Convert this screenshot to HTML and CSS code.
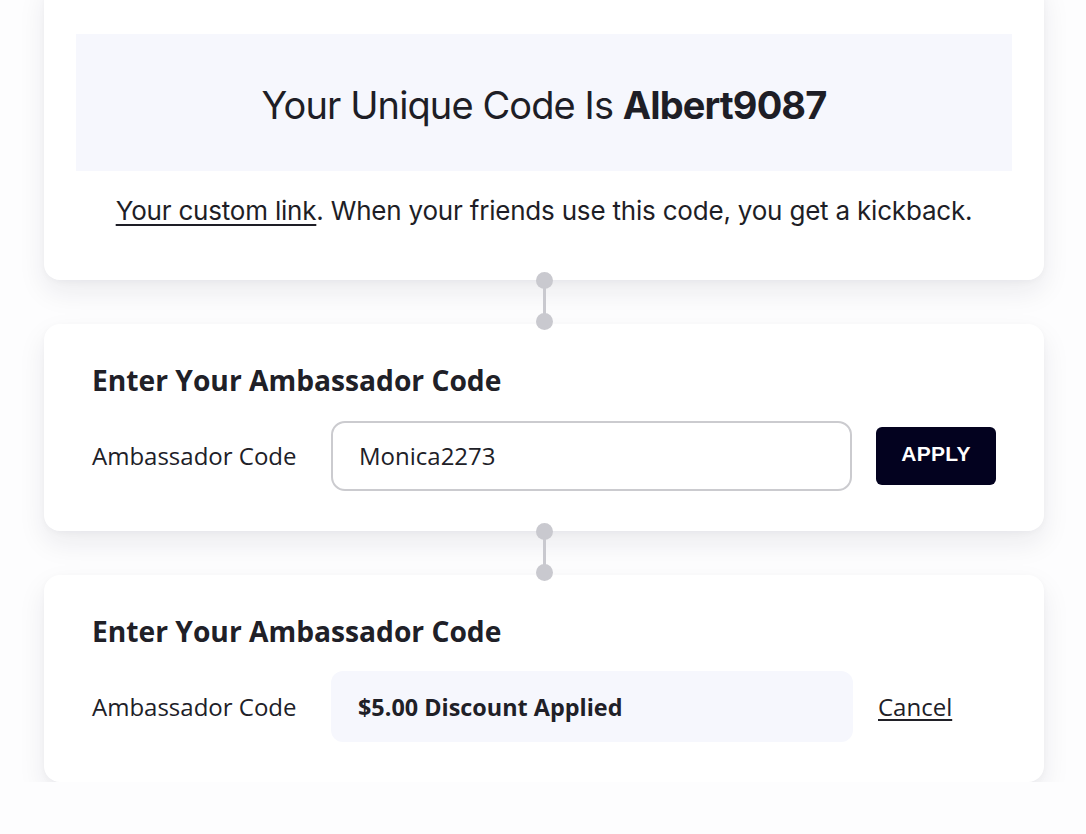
FILE: index.html
```html
<!DOCTYPE html>
<html>
<head>
<meta charset="utf-8">
<link rel="stylesheet" href="styles.css">
</head>
<body>
<main class="stack">
  <section class="card card-top">
    <div class="code-box">
      <p class="code-text">Your Unique Code Is <strong>Albert9087</strong></p>
    </div>
    <p class="link-text"><a class="ulink" href="#">Your custom link</a>. When your friends use this code, you get a kickback.</p>
  </section>

  <div class="connector"><span class="dot"></span><span class="bar"></span><span class="dot"></span></div>

  <section class="card">
    <h2 class="title">Enter Your Ambassador Code</h2>
    <div class="row">
      <span class="label">Ambassador Code</span>
      <div class="field">Monica2273</div>
      <button class="apply">APPLY</button>
    </div>
  </section>

  <div class="connector"><span class="dot"></span><span class="bar"></span><span class="dot"></span></div>

  <section class="card">
    <h2 class="title">Enter Your Ambassador Code</h2>
    <div class="row">
      <span class="label">Ambassador Code</span>
      <div class="applied">$5.00 Discount Applied</div>
      <a class="cancel" href="#">Cancel</a>
    </div>
  </section>
</main>
</body>
</html>
```

FILE: styles.css
```css
* { box-sizing: border-box; }
html, body { margin: 0; padding: 0; }
body {
  background: #fdfdfe;
  color: #1d1d24;
  font-family: "Open Sans", "Liberation Sans", sans-serif;
  overflow: hidden;
}
.stack {
  width: 1000px;
  margin-left: 44px;
  display: flex;
  flex-direction: column;
}
.card {
  background: #ffffff;
  border-radius: 16px;
  box-shadow: 0 12px 28px rgba(30, 30, 50, 0.08), 0 2px 6px rgba(30, 30, 50, 0.03);
  padding: 40px 48px 40px 48px;
  height: 207px;
}
.card-top {
  margin-top: -20px;
  height: 300px;
  padding: 54px 32px 0 32px;
}
.code-box {
  background: #f6f7fd;
  height: 137px;
  display: flex;
  align-items: center;
  justify-content: center;
}
.code-text {
  margin: 0;
  font-family: "Inter", "Liberation Sans", sans-serif;
  font-size: 38px;
  letter-spacing: -0.9px;
  color: #1e1e26;
  padding-top: 4px;
}
.code-text strong { font-weight: 700; }
.link-text {
  margin: 24px 0 0 0;
  text-align: center;
  font-family: "Inter", "Liberation Sans", sans-serif;
  font-size: 26px;
  letter-spacing: -0.2px;
  color: #1e1e26;
}
.ulink { color: inherit; text-decoration: underline; text-underline-offset: 4px; text-decoration-thickness: 2px; }
.connector {
  position: relative;
  z-index: 2;
  height: 58px;
  margin: -8px 0 -6px 0;
  display: flex;
  flex-direction: column;
  align-items: center;
}
.dot {
  width: 17px;
  height: 17px;
  border-radius: 50%;
  background: #c9c9cf;
  flex: none;
}
.bar {
  width: 3px;
  flex: 1;
  background: #c9c9cf;
  margin: -2px 0;
}
.title {
  margin: 0;
  font-size: 28.2px;
  line-height: 32px;
  font-weight: 700;
  color: #202027;
}
.row {
  margin-top: 24px;
  display: flex;
  align-items: center;
  height: 71px;
}
.label {
  width: 239px;
  font-size: 24px;
  color: #202027;
}
.field {
  width: 521px;
  height: 70px;
  border: 2px solid #cbcbcf;
  border-radius: 14px;
  display: flex;
  align-items: center;
  padding-left: 26px;
  font-size: 24px;
  color: #202027;
}
.apply {
  margin-left: 24px;
  width: 120px;
  height: 58px;
  background: #03021f;
  color: #ffffff;
  border: none;
  border-radius: 6px;
  font-family: "Liberation Sans", Arial, sans-serif;
  font-weight: 700;
  font-size: 21px;
  letter-spacing: 0.3px;
  padding-bottom: 4px;
}
.applied {
  width: 522px;
  height: 71px;
  background: #f6f7fd;
  border-radius: 12px;
  display: flex;
  align-items: center;
  padding-left: 27px;
  font-size: 23.4px;
  font-weight: 700;
  color: #202027;
}
.cancel {
  margin-left: 25px;
  font-size: 24px;
  color: #202027;
  text-decoration: underline;
  text-underline-offset: 3px;
}
```
